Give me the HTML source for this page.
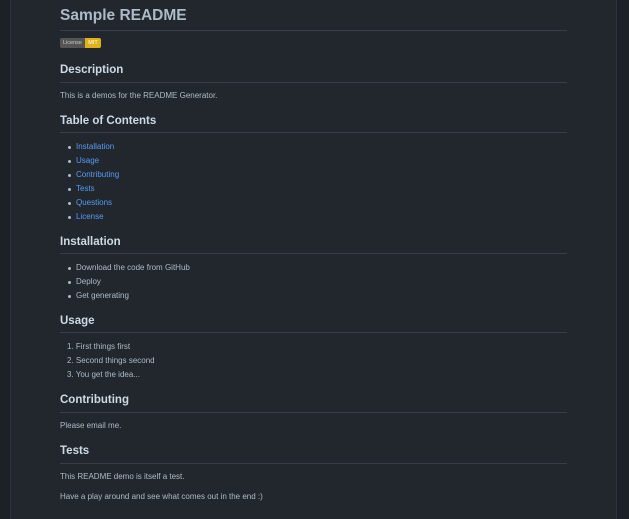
<!DOCTYPE html>
<html><head><meta charset="utf-8"><meta name="color-scheme" content="dark"><style>
:root{color-scheme:dark;}
html,body{margin:0;padding:0;width:629px;height:511px;overflow:hidden;background:#1c2128;}
.box{position:absolute;left:10px;top:-1px;width:605px;height:520px;background:#22272e;border-left:1px solid #2d333b;border-right:1px solid #2d333b;}
.t{position:absolute;left:60px;font-family:"Liberation Sans",sans-serif;color:#adbac7;white-space:nowrap;line-height:1;}
.h1{font-size:15.5px;font-weight:bold;color:#adbac7;}
.h2{font-size:11.5px;font-weight:bold;color:#cdd9e5;}
.p{font-size:8px;color:#adbac7;}
.a{color:#539bf5;}
.hr{position:absolute;left:60px;width:507px;height:1px;background:#373e47;}
.dot{position:absolute;left:68px;width:3px;height:3px;border-radius:50%;background:#adbac7;}
</style></head><body>
<div class="box"></div>
<div class="t h1" style="top:8px">Sample README</div>
<div class="hr" style="top:30px"></div>
<div style="position:absolute;left:60px;top:38px;height:10px;width:41px;border-radius:2px;overflow:hidden;font-family:'Liberation Sans',sans-serif;font-size:5.5px;line-height:10px;">
<span style="display:inline-block;width:25px;background:#555;color:#ccc;text-align:center;">License</span><span style="display:inline-block;width:16px;background:#dfb317;color:#fff;text-align:center;">MIT</span></div>

<div class="t h2" style="top:65px">Description</div>
<div class="hr" style="top:82px"></div>
<div class="t p" style="top:92px">This is a demos for the README Generator.</div>

<div class="t h2" style="top:116px">Table of Contents</div>
<div class="hr" style="top:132px"></div>
<div class="dot" style="top:146px"></div><div class="t p a" style="left:76px;top:143px">Installation</div>
<div class="dot" style="top:160px"></div><div class="t p a" style="left:76px;top:157px">Usage</div>
<div class="dot" style="top:174px"></div><div class="t p a" style="left:76px;top:171px">Contributing</div>
<div class="dot" style="top:188px"></div><div class="t p a" style="left:76px;top:185px">Tests</div>
<div class="dot" style="top:202px"></div><div class="t p a" style="left:76px;top:199px">Questions</div>
<div class="dot" style="top:216px"></div><div class="t p a" style="left:76px;top:213px">License</div>

<div class="t h2" style="top:237px">Installation</div>
<div class="hr" style="top:253px"></div>
<div class="dot" style="top:267px"></div><div class="t p" style="left:76px;top:264px">Download the code from GitHub</div>
<div class="dot" style="top:281px"></div><div class="t p" style="left:76px;top:278px">Deploy</div>
<div class="dot" style="top:295px"></div><div class="t p" style="left:76px;top:292px">Get generating</div>

<div class="t h2" style="top:316px">Usage</div>
<div class="hr" style="top:332px"></div>
<div class="t p" style="left:67px;top:343px">1. First things first</div>
<div class="t p" style="left:67px;top:357px">2. Second things second</div>
<div class="t p" style="left:67px;top:371px">3. You get the idea...</div>

<div class="t h2" style="top:395px">Contributing</div>
<div class="hr" style="top:412px"></div>
<div class="t p" style="top:422px">Please email me.</div>

<div class="t h2" style="top:446px">Tests</div>
<div class="hr" style="top:463px"></div>
<div class="t p" style="top:473px">This README demo is itself a test.</div>
<div class="t p" style="top:493px">Have a play around and see what comes out in the end :)</div>
</body></html>
